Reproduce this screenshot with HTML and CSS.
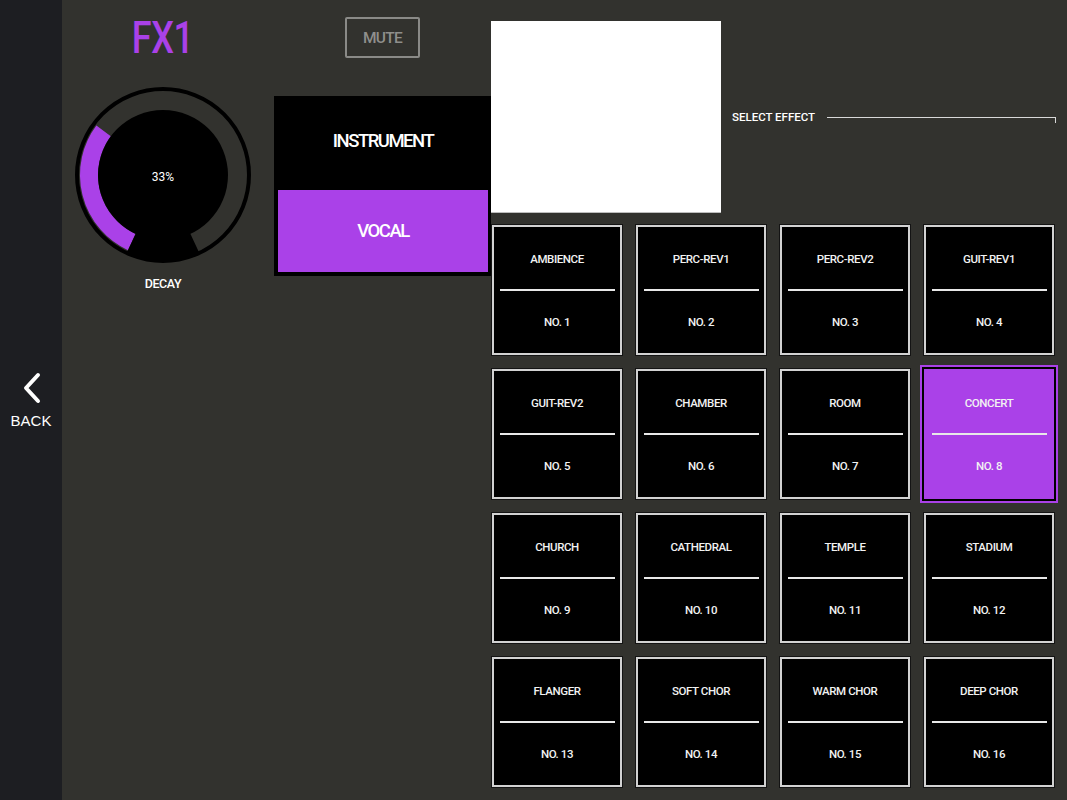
FILE: index.html
```html
<!DOCTYPE html>
<html>
<head>
<meta charset="utf-8">
<link rel="stylesheet" href="styles.css">
</head>
<body>
<div class="app">
  <aside class="sidebar">
    <svg class="chev" width="22" height="32" viewBox="0 0 22 32"><path d="M17 3 L5 16 L17 29" fill="none" stroke="#fff" stroke-width="4" stroke-linecap="round" stroke-linejoin="round"/></svg>
    <div class="back">BACK</div>
  </aside>
  <main class="main">
    <section class="left">
      <h1 class="title">FX1</h1>
      <div class="knob">
        <svg width="180" height="180" viewBox="0 0 180 180">
          <circle cx="90" cy="90" r="86" fill="#32322e" stroke="#000" stroke-width="4"/>
          <path d="M58.73 157.07 A74 74 0 0 1 30.59 45.88" fill="none" stroke="#aa41e8" stroke-width="18"/>
          <path d="M90 90 L126.34 167.94 A86 86 0 0 1 53.66 167.94 Z" fill="#000"/>
          <circle cx="90" cy="90" r="65" fill="#000"/>
        </svg>
        <div class="knob-val">33%</div>
      </div>
      <div class="knob-label">DECAY</div>
    </section>
    <section class="middle">
      <div class="mute">MUTE</div>
      <div class="panel">
        <div class="opt">INSTRUMENT</div>
        <div class="opt opt-on">VOCAL</div>
      </div>
    </section>
    <section class="right">
      <div class="top">
        <div class="preview"></div>
        <div class="sel-label">SELECT EFFECT</div>
        <div class="sel-line"></div>
      </div>
      <div class="grid">
        <div class="tile"><div class="t-name">AMBIENCE</div><div class="t-line"></div><div class="t-no">NO. 1</div></div>
        <div class="tile"><div class="t-name">PERC-REV1</div><div class="t-line"></div><div class="t-no">NO. 2</div></div>
        <div class="tile"><div class="t-name">PERC-REV2</div><div class="t-line"></div><div class="t-no">NO. 3</div></div>
        <div class="tile"><div class="t-name">GUIT-REV1</div><div class="t-line"></div><div class="t-no">NO. 4</div></div>
        <div class="tile"><div class="t-name">GUIT-REV2</div><div class="t-line"></div><div class="t-no">NO. 5</div></div>
        <div class="tile"><div class="t-name">CHAMBER</div><div class="t-line"></div><div class="t-no">NO. 6</div></div>
        <div class="tile"><div class="t-name">ROOM</div><div class="t-line"></div><div class="t-no">NO. 7</div></div>
        <div class="tile tile-on"><div class="t-name">CONCERT</div><div class="t-line"></div><div class="t-no">NO. 8</div></div>
        <div class="tile"><div class="t-name">CHURCH</div><div class="t-line"></div><div class="t-no">NO. 9</div></div>
        <div class="tile"><div class="t-name">CATHEDRAL</div><div class="t-line"></div><div class="t-no">NO. 10</div></div>
        <div class="tile"><div class="t-name">TEMPLE</div><div class="t-line"></div><div class="t-no">NO. 11</div></div>
        <div class="tile"><div class="t-name">STADIUM</div><div class="t-line"></div><div class="t-no">NO. 12</div></div>
        <div class="tile"><div class="t-name">FLANGER</div><div class="t-line"></div><div class="t-no">NO. 13</div></div>
        <div class="tile"><div class="t-name">SOFT CHOR</div><div class="t-line"></div><div class="t-no">NO. 14</div></div>
        <div class="tile"><div class="t-name">WARM CHOR</div><div class="t-line"></div><div class="t-no">NO. 15</div></div>
        <div class="tile"><div class="t-name">DEEP CHOR</div><div class="t-line"></div><div class="t-no">NO. 16</div></div>
      </div>
    </section>
  </main>
</div>
</body>
</html>
```
FILE: styles.css
```css
* { box-sizing: border-box; }
html, body { margin: 0; padding: 0; }
body {
  width: 1067px;
  height: 800px;
  overflow: hidden;
  background: #32322e;
  font-family: Roboto, "Liberation Sans", sans-serif;
  color: #fff;
}
.app { display: flex; height: 800px; }

.sidebar {
  width: 62px;
  flex: none;
  background: #1d1e22;
  display: flex;
  flex-direction: column;
  align-items: center;
  justify-content: center;
  padding-top: 0;
}
.chev { display: block; margin-left: 2px; }
.back {
  margin-top: 8px;
  font-family: "Liberation Sans", Arial, sans-serif;
  font-size: 15px;
  color: #fff;
}

.main { flex: 1; display: flex; background: #32322e; }

.left {
  width: 180px;
  margin-left: 11px;
  display: flex;
  flex-direction: column;
  align-items: center;
}
.title {
  margin: 12px 0 0 0;
  font-size: 45px;
  line-height: 52px;
  font-weight: 500;
  color: #aa41e8;
  transform: scaleX(0.8);
  letter-spacing: -0.5px;
}
.knob { position: relative; width: 180px; height: 180px; margin-top: 21px; }
.knob svg { display: block; }
.knob-val {
  position: absolute;
  left: 0; right: 0; top: 84px;
  text-align: center;
  font-size: 12px;
  line-height: 16px;
}
.knob-label {
  margin-top: 11px;
  font-size: 12.5px;
  font-weight: 500;
  letter-spacing: -0.4px;
}

.middle { width: 217px; margin-left: 21px; display: flex; flex-direction: column; }
.mute {
  margin: 17px auto 0 auto;
  width: 75px;
  height: 41px;
  border: 2px solid #8a8a87;
  border-radius: 2px;
  display: flex;
  align-items: center;
  justify-content: center;
  color: #8f8f8c;
  font-size: 15.5px;
  font-weight: 500;
  letter-spacing: -0.7px;
}
.panel {
  margin-top: 38px;
  height: 180px;
  background: #000;
  padding: 0 3px 4px 4px;
  display: flex;
  flex-direction: column;
}
.opt {
  height: 94px;
  display: flex;
  align-items: center;
  justify-content: center;
  font-size: 18.5px;
  font-weight: 500;
  letter-spacing: -1.5px;
  padding-bottom: 5px;
}
.opt-on { height: 82px; background: #aa41e8; padding-bottom: 0; }

.right { display: flex; flex-direction: column; padding-top: 21px; }
.top { display: flex; align-items: center; height: 192px; }
.preview {
  width: 230px;
  height: 192px;
  background: #fff;
  border-bottom: 1px solid #bdbdbd;
  flex: none;
}
.sel-label {
  margin-left: 11px;
  font-size: 11.5px;
  font-weight: 500;
  letter-spacing: 0;
}
.sel-line {
  margin-left: 12px;
  width: 229px;
  height: 6px;
  margin-top: 6px;
  border-top: 1px solid #d8d8d8;
  border-right: 1px solid #d8d8d8;
}

.grid {
  margin-top: 12px;
  margin-left: 1px;
  display: grid;
  grid-template-columns: repeat(4, 130px);
  grid-auto-rows: 130px;
  gap: 14px;
}
.tile {
  background: #000;
  border: 2px solid #d2d2d2;
  box-shadow: 0 0 0 1px #141414;
  display: flex;
  flex-direction: column;
  align-items: center;
}
.tile-on {
  background: #aa41e8;
  border: none;
  padding-top: 2px;
  box-shadow: 0 0 0 2px #000, 0 0 0 4px #aa41e8;
}
.t-name, .t-no {
  font-size: 11.5px;
  line-height: 14px;
  font-weight: 500;
  letter-spacing: -0.4px;
  color: #f2f2f2;
  white-space: nowrap;
}
.t-name { margin-top: 25px; }
.t-line { width: 115px; height: 2px; background: #e8e8e8; margin-top: 23px; }
.t-no { margin-top: 24px; }
```
